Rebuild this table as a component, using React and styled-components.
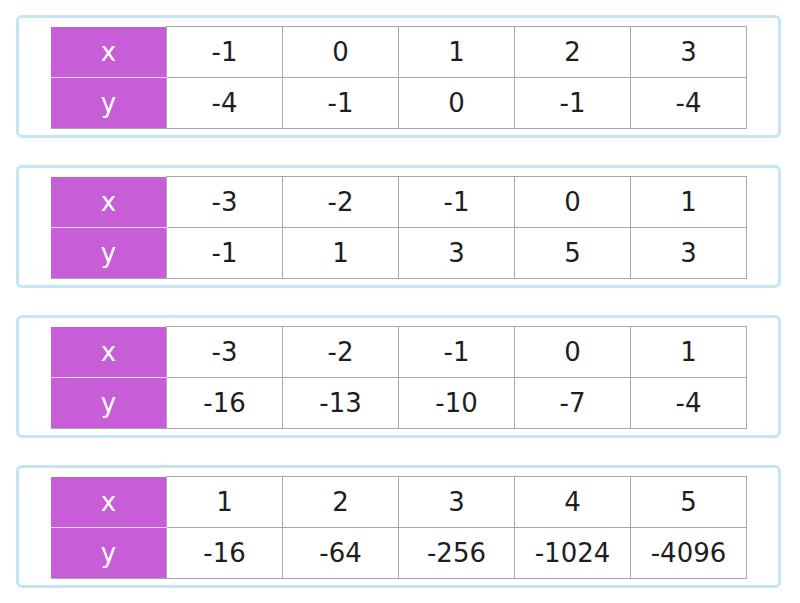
import styled, { createGlobalStyle } from 'styled-components';

const GlobalStyle = createGlobalStyle`
    body {
        margin: 0;
        background: #ffffff;
        font-family: "DejaVu Sans", Verdana, sans-serif;
    }
`;

const tables = [
    { x: ['-1', '0', '1', '2', '3'], y: ['-4', '-1', '0', '-1', '-4'] },
    { x: ['-3', '-2', '-1', '0', '1'], y: ['-1', '1', '3', '5', '3'] },
    { x: ['-3', '-2', '-1', '0', '1'], y: ['-16', '-13', '-10', '-7', '-4'] },
    { x: ['1', '2', '3', '4', '5'], y: ['-16', '-64', '-256', '-1024', '-4096'] },
];

export default function App() {
    return (
        <>
            <GlobalStyle />
            <Page>
                {tables.map((t, i) => (
                    <Card key={i}>
                        <Table>
                            <tbody>
                                <tr>
                                    <HeadCell>x</HeadCell>
                                    {t.x.map((v, j) => <Cell key={j}>{v}</Cell>)}
                                </tr>
                                <tr>
                                    <HeadCell>y</HeadCell>
                                    {t.y.map((v, j) => <Cell key={j}>{v}</Cell>)}
                                </tr>
                            </tbody>
                        </Table>
                    </Card>
                ))}
            </Page>
        </>
    )
}

const Page = styled.div`
    display: flex;
    flex-direction: column;
    gap: 27px;
    padding: 15px 0 0 16px;
`;

const Card = styled.div`
    width: 765px;
    height: 123px;
    box-sizing: border-box;
    border: 3px solid #c4e5f3;
    border-radius: 6px;
    padding: 8px 32px 7px 32px;
`;

const Table = styled.table`
    border-collapse: collapse;
    table-layout: fixed;
    width: 696px;
`;

const Cell = styled.td`
    height: 50px;
    padding: 0;
    border: 1.5px solid #a8a8a8;
    text-align: center;
    vertical-align: middle;
    font-size: 26px;
    color: #1e1e1e;
`;

const HeadCell = styled(Cell)`
    width: 115px;
    background: #c75ed7;
    color: #ffffff;
    border-left: none;
    border-top: none;
    border-bottom: 1.5px solid #f0d8f4;
    border-right: 1.5px solid #a8a8a8;

    tr:last-child & {
        border-bottom: 1.5px solid #a8a8a8;
    }
`;
